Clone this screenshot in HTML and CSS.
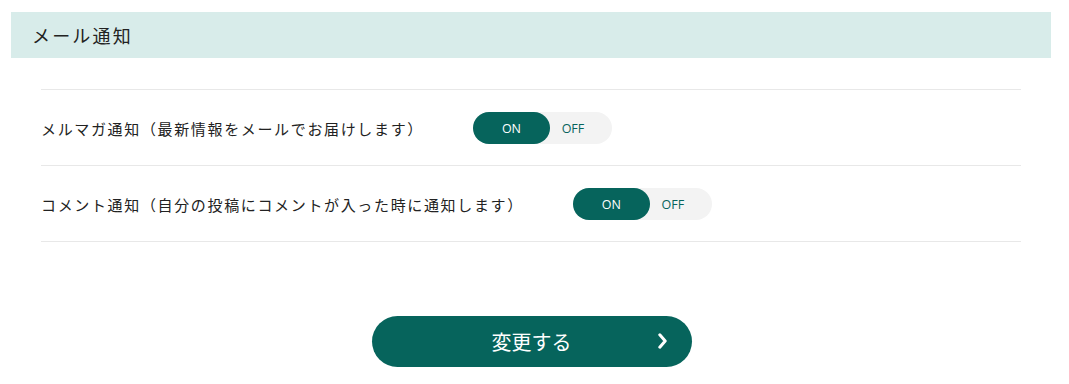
FILE: index.html
```html
<!DOCTYPE html>
<html lang="ja">
<head>
<meta charset="utf-8">
<link rel="stylesheet" href="styles.css">
</head>
<body>
<div class="page">
  <h2 class="section-title">メール通知</h2>
  <div class="settings">
    <div class="row">
      <span class="label">メルマガ通知（最新情報をメールでお届けします）</span>
      <div class="toggle"><span class="on">ON</span><span class="off">OFF</span></div>
    </div>
    <div class="row">
      <span class="label">コメント通知（自分の投稿にコメントが入った時に通知します）</span>
      <div class="toggle"><span class="on">ON</span><span class="off">OFF</span></div>
    </div>
  </div>
  <div class="actions">
    <button class="submit" type="button">
      <span class="submit-text">変更する</span>
      <svg class="chev" width="9" height="16" viewBox="0 0 9 16"><polyline points="1.8,1.8 7.2,8 1.8,14.2" fill="none" stroke="#fff" stroke-width="3" stroke-linecap="round" stroke-linejoin="round"/></svg>
    </button>
  </div>
</div>
</body>
</html>
```
FILE: styles.css
```css
* { box-sizing: border-box; }
body {
  margin: 0;
  background: #fff;
  font-family: "Noto Sans CJK JP", "Noto Sans", sans-serif;
  color: #222;
}
.page {
  padding: 12px 18px 0 11px;
}
.section-title {
  margin: 0;
  height: 46px;
  background: #d8ecea;
  padding-left: 21px;
  display: flex;
  align-items: center;
  font-size: 18px;
  font-weight: 400;
  letter-spacing: 0.12em;
}
.settings {
  margin: 31px 30px 0 30px;
  border-bottom: 1px solid #e8e8e8;
}
.row {
  border-top: 1px solid #e8e8e8;
  height: 76px;
  display: flex;
  align-items: center;
  gap: 49px;
  padding-top: 1px;
}
.label {
  font-size: 15px;
  letter-spacing: 0.11em;
  color: #222;
}
.toggle {
  width: 139px;
  height: 32px;
  border-radius: 16px;
  background: #f3f3f3;
  display: flex;
  font-family: "Open Sans", "Liberation Sans", sans-serif;
  font-size: 12.5px;
}
.on {
  width: 77px;
  height: 32px;
  border-radius: 16px;
  background: #06645c;
  color: #fff;
  display: flex;
  align-items: center;
  justify-content: center;
}
.off {
  flex: 1;
  padding-right: 16px;
  display: flex;
  align-items: center;
  justify-content: center;
  color: #06645c;
}
.actions {
  display: flex;
  justify-content: center;
  margin-top: 74px;
  padding-left: 1px;
}
.submit {
  width: 320px;
  height: 51px;
  border: none;
  border-radius: 26px;
  background: #06645c;
  color: #fff;
  font-family: "Noto Sans CJK JP", sans-serif;
  font-size: 20px;
  display: flex;
  align-items: center;
  justify-content: center;
  position: relative;
  padding: 0;
}
.submit-text { line-height: 1; }
.chev {
  position: absolute;
  right: 25px;
  top: 17px;
}
```
